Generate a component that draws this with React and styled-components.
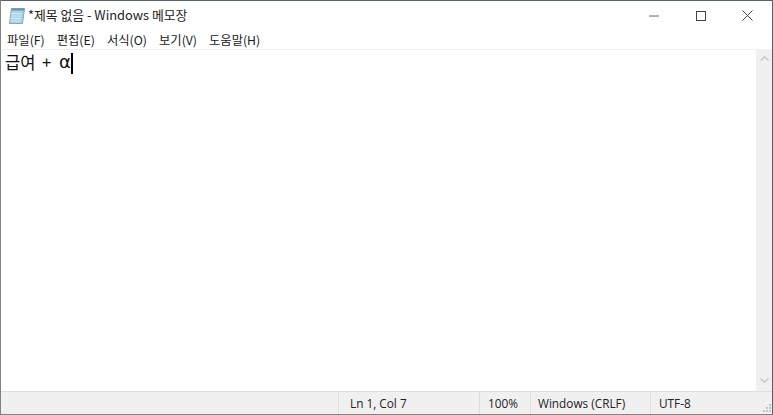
import React from 'react';
import styled, { createGlobalStyle } from 'styled-components';

const Global = createGlobalStyle`
  html, body { margin: 0; padding: 0; background: #fff; overflow: hidden; }
  * { box-sizing: border-box; }
`;

const FONT = `"Open Sans", "Noto Sans CJK KR", sans-serif`;
const UI_FONT = `"Noto Sans CJK KR", sans-serif`;

const Window = styled.div`
  width: 773px;
  height: 415px;
  display: flex;
  flex-direction: column;
  background: #fff;
  border: 1px solid #7f8488;
  border-top-color: #56616c;
  border-right-color: #56616c;
`;

const TitleBar = styled.div`
  height: 29px;
  display: flex;
  align-items: center;
  padding-left: 7px;
`;

const TitleText = styled.span`
  font: 12.85px ${UI_FONT};
  line-height: 27px;
  padding-bottom: 2px;
  color: #222;
  margin-left: 2px;
  white-space: nowrap;
`;

const Controls = styled.div`
  margin-left: auto;
  margin-right: 1px;
  display: flex;
`;

const Control = styled.div`
  width: 47px;
  height: 29px;
  display: flex;
  align-items: center;
  justify-content: center;
`;

const MenuBar = styled.div`
  height: 20px;
  display: flex;
  align-items: center;
  padding-left: 6px;
  gap: 12px;
  border-bottom: 1px solid #f0f0f0;
`;

const MenuItem = styled.span`
  font: 12.3px ${UI_FONT};
  color: #1a1a1a;
  white-space: nowrap;
`;

const Body = styled.div`
  flex: 1;
  display: flex;
  min-height: 0;
`;

const Editor = styled.div`
  flex: 1;
  padding: 0 0 0 4px;
  font: 16.5px ${UI_FONT};
  line-height: 24px;
  color: #111;
  white-space: pre;
  word-spacing: 3px;
  display: flex;
  align-items: flex-start;
`;

const Alpha = styled.span`
  font-family: "DejaVu Sans", sans-serif;
  font-size: 18px;
  line-height: 24px;
  margin-left: 1px;
`;

const Caret = styled.span`
  display: inline-block;
  width: 2px;
  height: 21px;
  background: #000;
  margin: 3px 0 0 0;
`;

const ScrollBar = styled.div`
  width: 16px;
  background: #f0f0f0;
  display: flex;
  flex-direction: column;
  justify-content: space-between;
  align-items: center;
  padding: 6px 0 8px;
`;

const StatusBar = styled.div`
  height: 23px;
  display: flex;
  background: #f0f0f0;
  border-top: 1px solid #dfdfdf;
  position: relative;
`;

const Spacer = styled.div`
  width: 337px;
`;

const Cell = styled.div`
  width: ${p => p.$w}px;
  border-left: 1px solid #dcdcdc;
  padding-left: ${p => p.$pad}px;
  font: 11.8px ${FONT};
  line-height: 22px;
  color: #222;
  white-space: nowrap;
`;

const Grip = styled.svg`
  position: absolute;
  right: 0;
  bottom: 0;
`;

const NotepadIcon = () => (
  <svg width="18" height="18" viewBox="0 0 18 18">
    <path d="M3.5 1.5 L16.5 1.5 L14.5 16.5 L1.5 16.5 Z" fill="#a9d3e8" stroke="#8aa4b0" />
    <path d="M3.4 1.5 L16.5 1.5 L16.2 3.5 L3.1 3.5 Z" fill="#6d93a6" />
    <path d="M3.2 6.5h10M3 9h10M2.7 11.5h10M2.4 14h10" stroke="#d4ebf5" />
  </svg>
);

const Arrow = ({ up }) => (
  <svg width="9" height="5" viewBox="0 0 9 5">
    <path d={up ? 'M0.5 4.5 L4.5 0.8 L8.5 4.5' : 'M0.5 0.5 L4.5 4.2 L8.5 0.5'} fill="none" stroke="#c2c2c2" strokeWidth="1.3" />
  </svg>
);

const menus = ['파일(F)', '편집(E)', '서식(O)', '보기(V)', '도움말(H)'];

export default function App() {
  return (
    <Window>
      <Global />
      <TitleBar>
        <NotepadIcon />
        <TitleText>*제목 없음 - Windows 메모장</TitleText>
        <Controls>
          <Control>
            <svg width="10" height="10" viewBox="0 0 10 10"><path d="M0 5h10" stroke="#666" /></svg>
          </Control>
          <Control>
            <svg width="10" height="10" viewBox="0 0 10 10"><rect x=".5" y=".5" width="9" height="9" fill="none" stroke="#444" /></svg>
          </Control>
          <Control>
            <svg width="11" height="11" viewBox="0 0 11 11"><path d="M.5.5l10 10M10.5.5l-10 10" stroke="#444" /></svg>
          </Control>
        </Controls>
      </TitleBar>
      <MenuBar>
        {menus.map(m => <MenuItem key={m}>{m}</MenuItem>)}
      </MenuBar>
      <Body>
        <Editor>급여 + <Alpha>α</Alpha><Caret /></Editor>
        <ScrollBar>
          <Arrow up />
          <Arrow />
        </ScrollBar>
      </Body>
      <StatusBar>
        <Spacer />
        <Cell $w="141" $pad="11">Ln 1, Col 7</Cell>
        <Cell $w="51" $pad="8">100%</Cell>
        <Cell $w="120" $pad="7">Windows (CRLF)</Cell>
        <Cell $w="122" $pad="8">UTF-8</Cell>
        <Grip width="12" height="12" viewBox="0 0 12 12">
          <path d="M9 2h2v2H9zM6 5h2v2H6zM9 5h2v2H9zM3 8h2v2H3zM6 8h2v2H6zM9 8h2v2H9z" fill="#c4c4c4" />
        </Grip>
      </StatusBar>
    </Window>
  );
}
